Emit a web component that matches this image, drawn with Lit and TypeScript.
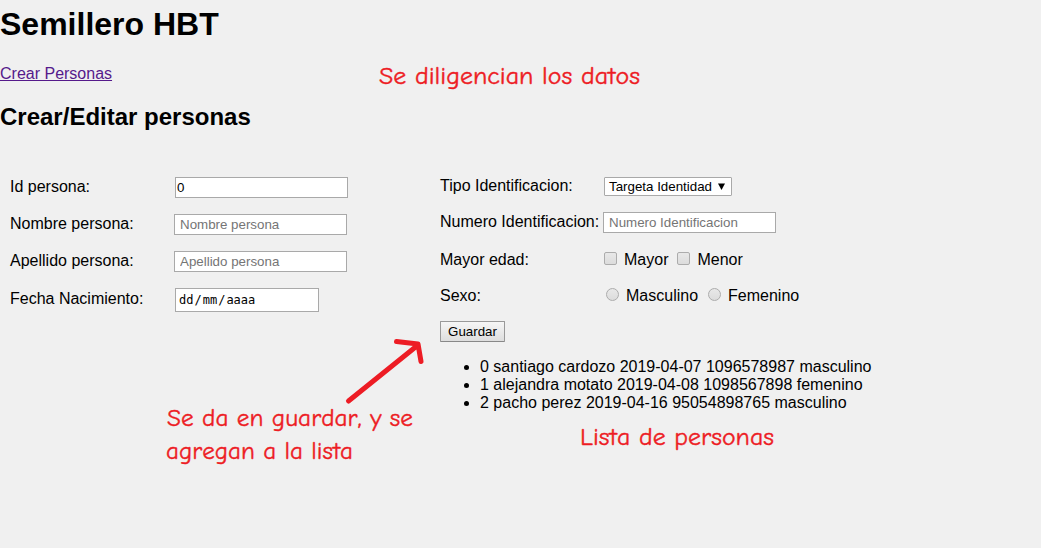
import { LitElement, html, svg, css } from "lit";
import { customElement, state } from "lit/decorators.js";

interface Persona {
  id: number;
  nombre: string;
  fecha: string;
  numero: string;
  sexo: string;
}

@customElement("app-root")
export class AppRoot extends LitElement {
  @state() private personas: Persona[] = [
    { id: 0, nombre: "santiago cardozo", fecha: "2019-04-07", numero: "1096578987", sexo: "masculino" },
    { id: 1, nombre: "alejandra motato", fecha: "2019-04-08", numero: "1098567898", sexo: "femenino" },
    { id: 2, nombre: "pacho perez", fecha: "2019-04-16", numero: "95054898765", sexo: "masculino" },
  ];

  static styles = css`
    :host {
      display: block;
      position: relative;
      box-sizing: border-box;
      height: 548px;
      overflow: hidden;
      background: #f0f0f0;
      color: #000;
      font: 16px/18px "Liberation Sans", Arial, sans-serif;
    }
    * { box-sizing: border-box; }
    h1 { margin: 0; padding-top: 6px; font-size: 32px; line-height: 37px; }
    .nav { display: block; margin-top: 22px; width: max-content; color: #551a8b; text-decoration: underline; }
    h2 { margin: 20px 0 0; font-size: 24px; line-height: 28px; }
    .form { display: grid; grid-template-columns: 430px 1fr; padding: 46px 0 0 10px; }
    .row { display: flex; align-items: flex-start; height: 37px; white-space: nowrap; }
    .label { width: 164px; flex: none; padding-top: 1px; }
    .wide { width: 165px; }
    .low { padding-top: 2px; }
    .right { width: 163px; }
    .tipo .label { padding-top: 0; }
    .text { padding-top: 1px; }
    .txt {
      appearance: none; margin: 0; width: 173px; height: 21px; border: 1px solid #a9a9a9;
      border-radius: 0; background: #fff; color: #000; padding: 0 5px;
      font: 13.333px "Liberation Sans", Arial, sans-serif;
    }
    .txt::placeholder { color: #757575; opacity: 1; }
    .id { padding: 0 1px; }
    .date {
      width: 144px; height: 24px; border: 1px solid #a9a9a9; background: #fff;
      padding: 0 3px; font: 12px/22px "DejaVu Sans Mono", monospace; white-space: pre;
    }
    .slash { padding: 0 1px; }
    .select {
      display: flex; align-items: center; justify-content: space-between;
      width: 128px; height: 19px; margin-left: 1px; padding: 0 6px 0 4px; border: 1px solid #a9a9a9; border-radius: 1px;
      background: #fff; font-size: 13.333px; line-height: 17px;
    }
    .tipo { height: 35px; }
    .numero { height: 38px; }
    .edad { height: 36px; }
    .sexo { height: 35px; }
    .opt { appearance: none; flex: none; width: 13px; height: 13px; border: 1px solid #acacac; background: linear-gradient(#e8e8e8, #dcdcdc); }
    .check { margin: 2px 7px 0 1px; border-radius: 2px; }
    .check2 { margin-left: 9px; }
    .radio { margin: 2px 7px 0 3px; border-radius: 50%; }
    .radio2 { margin-left: 10px; }
    .btn {
      display: block; width: 65px; height: 21px; margin: 0; padding: 0; border: 1px solid #999; border-bottom-color: #888;
      border-radius: 1px; background: linear-gradient(#f6f6f6, #dedede); color: #000;
      font: 13.333px "Liberation Sans", Arial, sans-serif;
    }
    ul { margin: 16px 0 0; padding: 0 0 0 40px; }
    .notes { position: absolute; left: 0; top: 0; width: 1041px; height: 548px; pointer-events: none; }
    .note { fill: #ed1c24; stroke: #ed1c24; stroke-width: 0.4px; font: 24px "Comic Sans MS", "Comic Neue", "Open Sans", sans-serif; font-kerning: none; }
  `;

  private note(text: string, x: number, y: number, width: number) {
    return svg`<text class="note" x=${x} y=${y} textLength=${width} lengthAdjust="spacingAndGlyphs">${text}</text>`;
  }

  render() {
    return html`
      <h1>Semillero HBT</h1>
      <a class="nav">Crear Personas</a>
      <h2>Crear/Editar personas</h2>
      <div class="form">
        <div>
          <div class="row"><span class="label wide">Id persona:</span><input class="txt id" value="0" /></div>
          <div class="row"><span class="label">Nombre persona:</span><input class="txt" placeholder="Nombre persona" /></div>
          <div class="row"><span class="label">Apellido persona:</span><input class="txt" placeholder="Apellido persona" /></div>
          <div class="row"><span class="label wide low">Fecha Nacimiento:</span><div class="date">dd<span class="slash">/</span>mm<span class="slash">/</span>aaaa</div></div>
        </div>
        <div>
          <div class="row tipo">
            <span class="label right">Tipo Identificacion:</span>
            <div class="select"><span>Targeta Identidad</span>
              <svg width="7" height="7" viewBox="0 0 7 7"><path d="M0 .5h7L3.5 7z" /></svg>
            </div>
          </div>
          <div class="row numero"><span class="label right">Numero Identificacion:</span><input class="txt" placeholder="Numero Identificacion" /></div>
          <div class="row edad">
            <span class="label right">Mayor edad:</span>
            <input type="checkbox" class="opt check" /><span class="text">Mayor</span>
            <input type="checkbox" class="opt check check2" /><span class="text">Menor</span>
          </div>
          <div class="row sexo">
            <span class="label right">Sexo:</span>
            <input type="radio" name="sexo" class="opt radio" /><span class="text">Masculino</span>
            <input type="radio" name="sexo" class="opt radio radio2" /><span class="text">Femenino</span>
          </div>
          <button class="btn">Guardar</button>
          <ul>
            ${this.personas.map((p) => html`<li>${p.id} ${p.nombre} ${p.fecha} ${p.numero} ${p.sexo}</li>`)}
          </ul>
        </div>
      </div>
      <svg class="notes" viewBox="0 0 1041 548">
        ${this.note("Se diligencian los datos", 379, 84, 261)}
        ${this.note("Se da en guardar, y se", 167, 426, 246)}
        ${this.note("agregan a la lista", 166, 459, 187)}
        ${this.note("Lista de personas", 580, 445, 194)}
        <path d="M348.500 401 418 345M396.500 341.500 418 344 421 361.500" fill="none" stroke="#ed1c24" stroke-width="5" stroke-linecap="round" stroke-linejoin="round" />
      </svg>
    `;
  }
}
